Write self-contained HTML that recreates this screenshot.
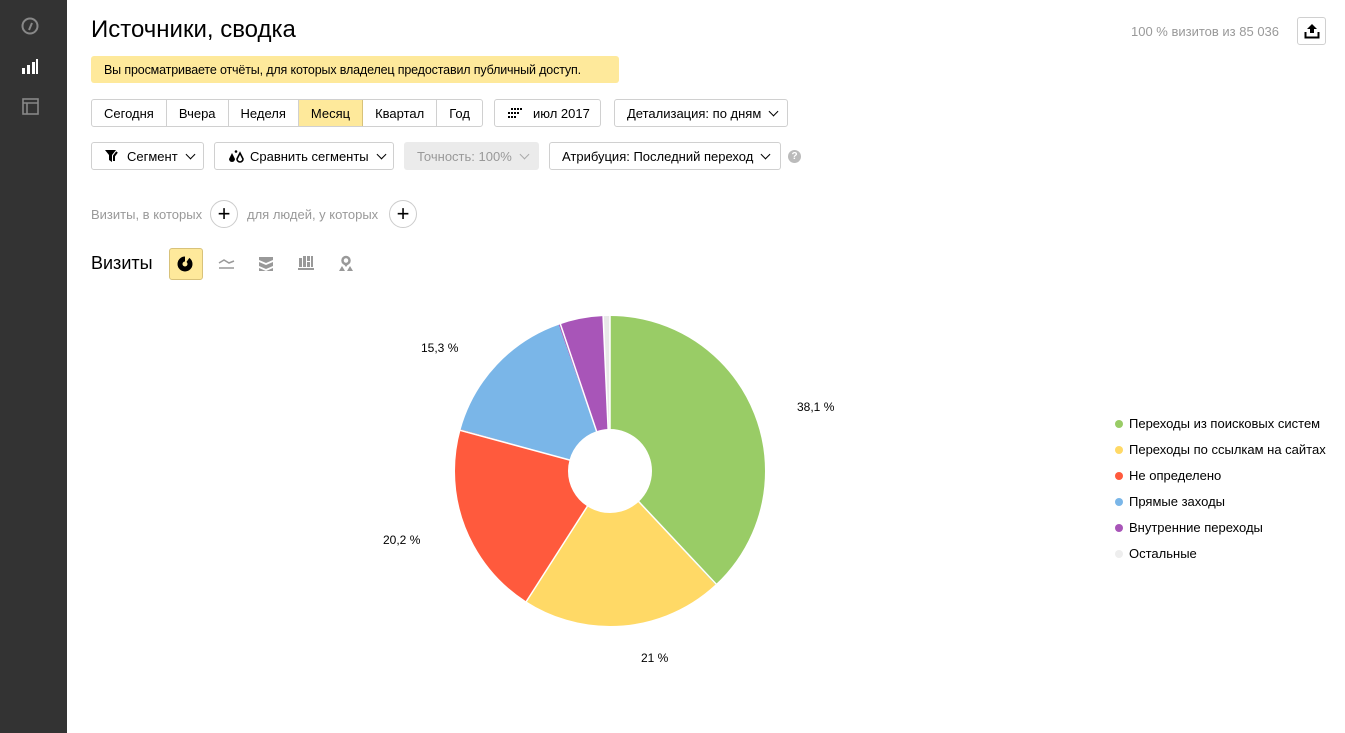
<!DOCTYPE html>
<html><head><meta charset="utf-8"><style>
*{box-sizing:border-box;margin:0;padding:0}
body{width:1345px;height:733px;overflow:hidden;background:#fff;font-family:"Liberation Sans",sans-serif;font-size:13px;color:#000;position:relative}
.side{position:absolute;left:0;top:0;width:67px;height:733px;background:#333}
.abs{position:absolute}
.btn{position:absolute;height:28px;border:1px solid #d0d0d0;border-radius:3px;background:#fff;display:flex;align-items:center;white-space:nowrap;font-size:13px}
.grp{position:absolute;left:91px;top:99px;height:28px;display:flex;border:1px solid #d0d0d0;border-radius:3px;overflow:hidden}
.grp div{padding:0 12px;display:flex;align-items:center;border-right:1px solid #d0d0d0}
.grp div:last-child{border-right:none}
.chev{display:inline-block;width:7px;height:7px;border-right:1.5px solid #000;border-bottom:1.5px solid #000;transform:rotate(45deg);margin:-4px 2px 0 9px}
.plus{position:absolute;width:28px;height:28px;border:1px solid #ccc;border-radius:50%;font-size:22px;display:flex;align-items:center;justify-content:center;line-height:1}
.leg{position:absolute;left:1115px;font-size:13px;display:flex;align-items:center}
.leg i{width:8px;height:8px;border-radius:50%;margin-right:6px;display:inline-block}
.lbl{position:absolute;font-size:12px}
</style></head><body>
<div class="side">
<svg class="abs" style="left:20px;top:17px" width="20" height="18" viewBox="0 0 20 18"><circle cx="10" cy="9" r="7.5" fill="none" stroke="#888" stroke-width="2"/><path d="M9 13 L12 6" stroke="#888" stroke-width="2"/></svg>
<svg class="abs" style="left:21px;top:59px" width="18" height="16" viewBox="0 0 18 16"><rect x="1" y="9" width="3" height="6" fill="#fff"/><rect x="6" y="6" width="3" height="9" fill="#fff"/><rect x="11" y="3" width="3" height="12" fill="#fff"/><rect x="15" y="0" width="2" height="15" fill="#fff"/></svg>
<svg class="abs" style="left:22px;top:98px" width="17" height="17" viewBox="0 0 17 17"><rect x="1" y="1" width="15" height="15" fill="none" stroke="#888" stroke-width="1.6"/><path d="M1 5 H16 M5 5 V16" stroke="#888" stroke-width="1.6"/></svg>
</div>
<div class="abs" style="left:91px;top:16px;font-size:24px">Источники, сводка</div>
<div class="abs" style="left:1131px;top:24px;font-size:13px;color:#999">100 % визитов из 85 036</div>
<div class="btn" style="left:1297px;top:17px;width:29px;height:28px;justify-content:center"><svg width="16" height="16" viewBox="0 0 16 16"><path d="M8 1 L3 6 H6 V10 H10 V6 H13 Z" fill="#000"/><path d="M1.5 9 V14.5 H14.5 V9" fill="none" stroke="#000" stroke-width="2"/></svg></div>
<div class="abs" style="left:91px;top:56px;width:528px;height:27px;background:#fee99b;border-radius:3px;padding:0 13px;display:flex;align-items:center;font-size:12.5px;white-space:nowrap;letter-spacing:-0.15px">Вы просматриваете отчёты, для которых владелец предоставил публичный доступ.</div>
<div class="grp"><div>Сегодня</div><div>Вчера</div><div>Неделя</div><div style="background:#fee99b;border-color:#d8c27a">Месяц</div><div>Квартал</div><div>Год</div></div>
<div class="btn" style="left:494px;top:99px;width:107px;padding-left:13px"><svg width="14" height="10" viewBox="0 0 14 10" style="margin-right:11px"><g fill="#000"><rect x="0" y="4" width="2" height="2"/><rect x="3" y="0" width="2" height="2"/><rect x="3" y="4" width="2" height="2"/><rect x="3" y="8" width="2" height="2"/><rect x="6" y="0" width="2" height="2"/><rect x="6" y="4" width="2" height="2"/><rect x="6" y="8" width="2" height="2"/><rect x="9" y="0" width="2" height="2"/><rect x="9" y="4" width="2" height="2"/><rect x="0" y="8" width="2" height="2"/><rect x="12" y="0" width="2" height="2"/></g></svg>июл 2017</div>
<div class="btn" style="left:614px;top:99px;width:174px;padding-left:12px">Детализация: по дням<span class="chev"></span></div>
<div class="btn" style="left:91px;top:142px;width:113px;padding-left:13px"><svg width="16" height="13" viewBox="0 0 16 13" style="margin-right:6px"><path d="M0 0 H11 L7 5 V12 L4 10 V5 Z" fill="#000"/><path d="M12 2 L9 6 V11" fill="none" stroke="#000" stroke-width="2"/></svg>Сегмент<span class="chev"></span></div>
<div class="btn" style="left:214px;top:142px;width:180px;padding-left:13px"><svg width="16" height="13" viewBox="0 0 16 13" style="margin-right:6px"><path d="M4 3 L1 9 A3 3 0 0 0 7 9 Z" fill="#000"/><path d="M12 3 L9 9 A3 3 0 0 0 15 9 Z" fill="none" stroke="#000" stroke-width="1.6"/><circle cx="8" cy="1.5" r="1.3" fill="#000"/></svg>Сравнить сегменты<span class="chev"></span></div>
<div class="btn" style="left:404px;top:142px;width:135px;padding-left:12px;background:#ebebeb;border-color:#ebebeb;color:#999">Точность: 100%<span class="chev" style="border-color:#aaa"></span></div>
<div class="btn" style="left:549px;top:142px;width:232px;padding-left:12px">Атрибуция: Последний переход<span class="chev"></span></div>
<div class="abs" style="left:788px;top:150px;width:13px;height:13px;border-radius:50%;background:#bbb;color:#fff;font-size:10px;font-weight:bold;text-align:center;line-height:13px">?</div>
<div class="abs" style="left:91px;top:207px;color:#999">Визиты, в которых</div>
<div class="plus" style="left:210px;top:200px">+</div>
<div class="abs" style="left:247px;top:207px;color:#999">для людей, у которых</div>
<div class="plus" style="left:389px;top:200px">+</div>
<div class="abs" style="left:91px;top:253px;font-size:18px">Визиты</div>
<div class="abs" style="left:169px;top:248px;width:34px;height:32px;background:#fee99b;border:1px solid #d8c27a;border-radius:3px"></div>
<svg class="abs" style="left:177px;top:256px" width="16" height="16" viewBox="0 0 16 16"><circle cx="8" cy="8" r="5" fill="none" stroke="#000" stroke-width="5"/><path d="M8 8 L8 0 L13 1 Z" fill="#fee99b"/></svg>
<svg class="abs" style="left:218px;top:257px" width="17" height="14" viewBox="0 0 17 14"><path d="M1 6 L6 3 L11 6 L16 4" fill="none" stroke="#999" stroke-width="1.5"/><path d="M1 11 H16" stroke="#999" stroke-width="1.5"/></svg>
<svg class="abs" style="left:258px;top:256px" width="16" height="16" viewBox="0 0 16 16"><path d="M1 1 H15 V4 L8 7 L1 4Z M1 6 L8 9 L15 6 V10 L8 13 L1 10Z M1 12 L8 15 L15 12 V15 H1Z" fill="#999"/></svg>
<svg class="abs" style="left:298px;top:255px" width="16" height="16" viewBox="0 0 16 16"><g fill="#999"><rect x="1" y="3" width="3" height="9"/><rect x="5" y="1" width="3" height="11"/><rect x="9" y="1" width="3" height="5"/><rect x="9" y="7" width="3" height="5"/><rect x="13" y="1" width="2" height="11"/><rect x="0" y="13" width="16" height="2"/></g></svg>
<svg class="abs" style="left:338px;top:255px" width="16" height="17" viewBox="0 0 16 17"><circle cx="8" cy="5.5" r="3.5" fill="none" stroke="#999" stroke-width="2.5"/><path d="M8 12 L5 8 H11Z M1 16 L4 11 L7 16Z M9 16 L12 11 L15 16Z" fill="#999"/></svg>
<svg class="abs" style="left:0;top:0" width="1345" height="733">
<g transform="translate(610,471) rotate(-90)" fill="none" stroke-width="113">
<circle r="98.5" stroke="#99cc66" stroke-dasharray="235.80 1000" stroke-dashoffset="0"/>
<circle r="98.5" stroke="#ffd966" stroke-dasharray="129.97 1000" stroke-dashoffset="-235.80"/>
<circle r="98.5" stroke="#ff5a3d" stroke-dasharray="125.02 1000" stroke-dashoffset="-365.77"/>
<circle r="98.5" stroke="#7ab6e8" stroke-dasharray="94.69 1000" stroke-dashoffset="-490.79"/>
<circle r="98.5" stroke="#a855b8" stroke-dasharray="28.47 1000" stroke-dashoffset="-585.48"/>
<circle r="98.5" stroke="#e8e8e8" stroke-dasharray="4.95 1000" stroke-dashoffset="-613.95"/>
</g>
<g stroke="#fff" stroke-width="1.5">
<line x1="610" y1="471" x2="610" y2="314"/>
<line x1="610" y1="471" x2="717" y2="585"/>
<line x1="610" y1="471" x2="526" y2="602"/>
<line x1="610" y1="471" x2="459" y2="430"/>
<line x1="610" y1="471" x2="560" y2="323"/>
<line x1="610" y1="471" x2="603" y2="314"/>
</g>
</svg>
<div class="lbl" style="left:797px;top:400px">38,1 %</div>
<div class="lbl" style="left:641px;top:651px">21 %</div>
<div class="lbl" style="left:383px;top:533px">20,2 %</div>
<div class="lbl" style="left:421px;top:341px">15,3 %</div>
<div class="leg" style="top:416px"><i style="background:#99cc66"></i>Переходы из поисковых систем</div>
<div class="leg" style="top:442px"><i style="background:#ffd966"></i>Переходы по ссылкам на сайтах</div>
<div class="leg" style="top:468px"><i style="background:#ff5a3d"></i>Не определено</div>
<div class="leg" style="top:494px"><i style="background:#7ab6e8"></i>Прямые заходы</div>
<div class="leg" style="top:520px"><i style="background:#a855b8"></i>Внутренние переходы</div>
<div class="leg" style="top:546px"><i style="background:#eee"></i>Остальные</div>
</body></html>
